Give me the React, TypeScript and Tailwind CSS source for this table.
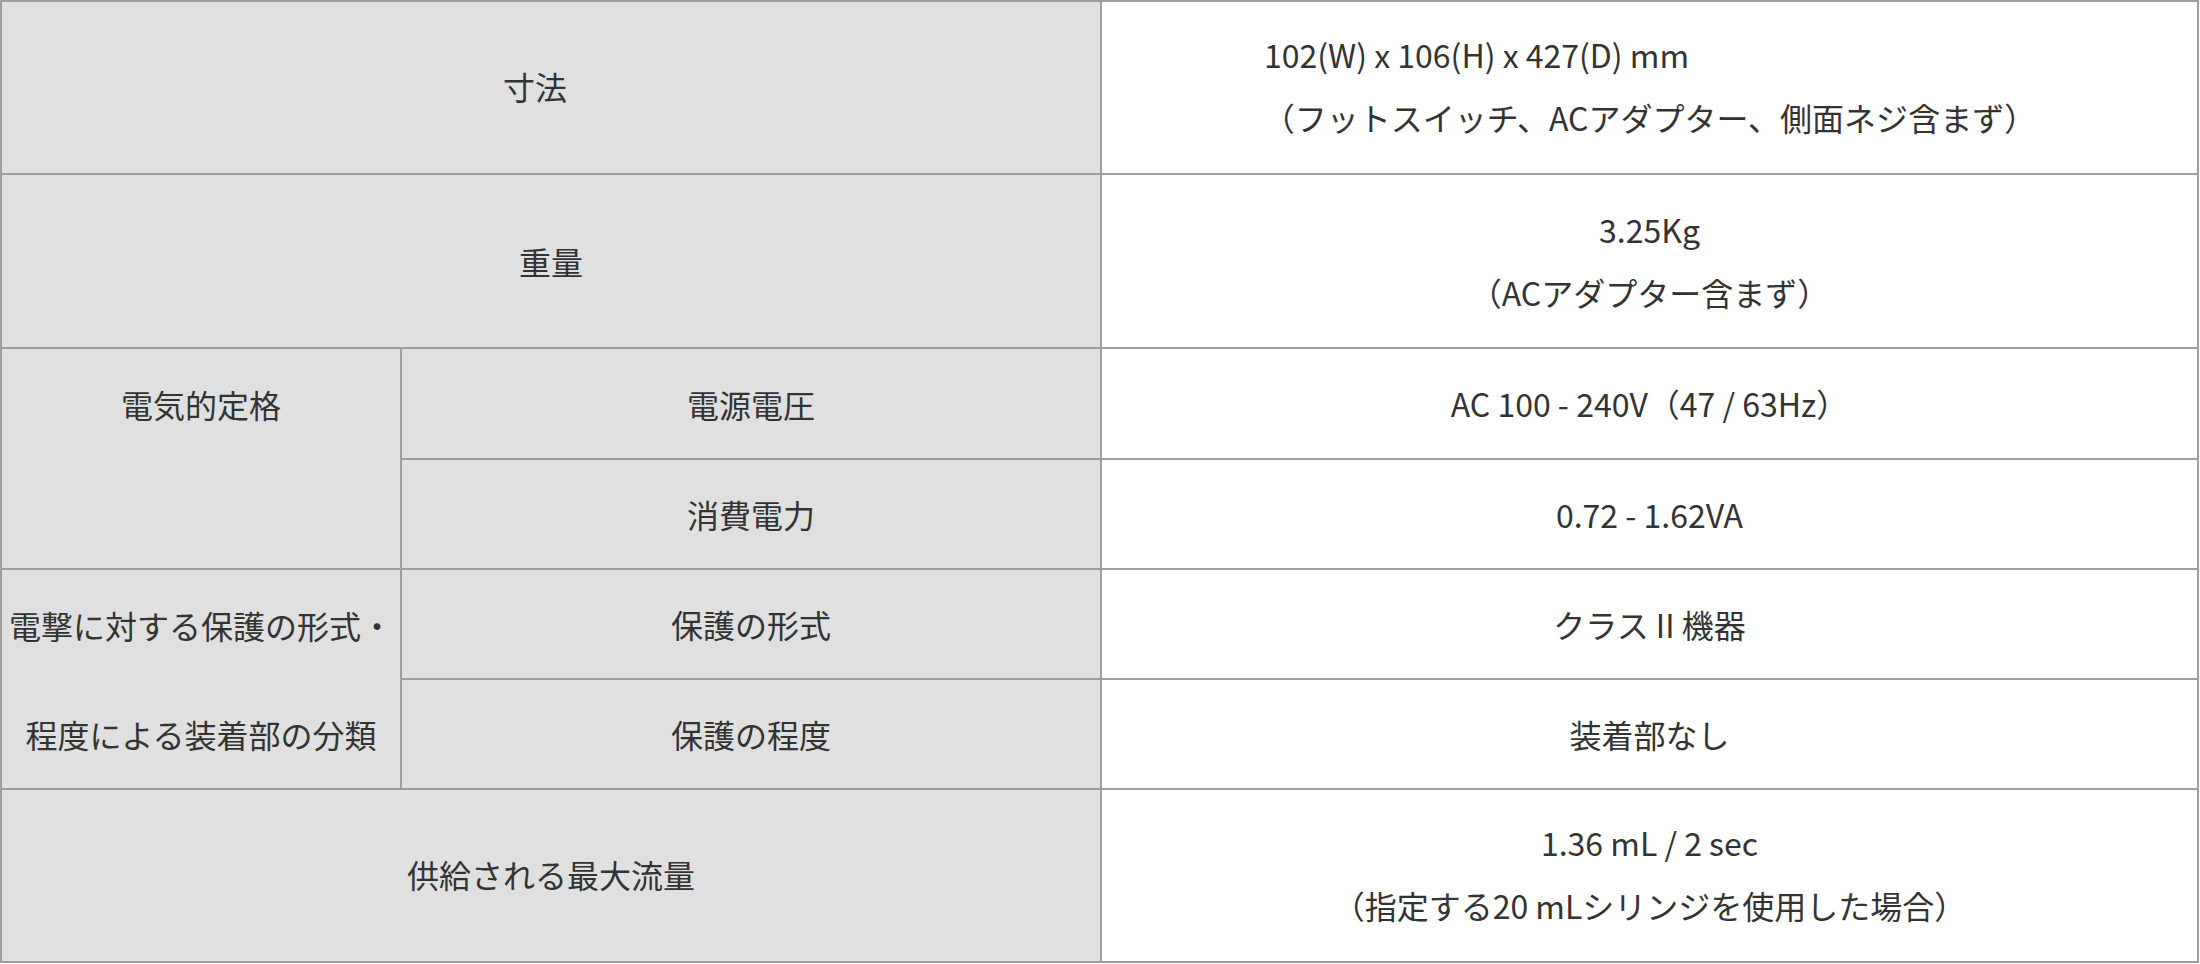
import React from "react";

const label = "bg-[#e0e0e0] flex items-center justify-center";
const value = "bg-white flex flex-col items-center justify-center leading-[63px]";

export default function App() {
  return (
    <div
      className="w-[2200px] h-[964px] bg-white text-[#333333] text-[32px] leading-[1.5]"
      style={{ fontFamily: '"Noto Sans CJK JP", "Noto Sans", sans-serif' }}
    >
      <div className="grid w-[2199px] grid-cols-[398px_698px_1095px] grid-rows-[171px_172px_109px_108px_108px_108px_171px] gap-[2px] bg-[#9e9e9e] p-[2px]">
        {/* Row 1 */}
        <div className={`${label} col-span-2 pr-8 pb-[4px]`}>寸法</div>
        <div className={`${value} pb-[4px]`}>
          <div className="self-stretch pl-[162px] text-left">102(W) x 106(H) x 427(D) mm</div>
          <div>（フットスイッチ、ACアダプター、側面ネジ含まず）</div>
        </div>

        {/* Row 2 */}
        <div className={`${label} col-span-2`}>重量</div>
        <div className={value}>
          <div>3.25Kg</div>
          <div>（ACアダプター含まず）</div>
        </div>

        {/* Row 3-4 */}
        <div className="bg-[#e0e0e0] row-span-2 flex flex-col">
          <div className="h-[109px] flex items-center justify-center whitespace-nowrap">電気的定格</div>
        </div>
        <div className={label}>電源電圧</div>
        <div className={value}>AC 100 - 240V（47 / 63Hz）</div>
        <div className={label}>消費電力</div>
        <div className={value}>0.72 - 1.62VA</div>

        {/* Row 5-6 */}
        <div className="bg-[#e0e0e0] row-span-2 flex flex-col">
          <div className="h-[109px] flex items-center justify-center whitespace-nowrap">電撃に対する保護の形式・</div>
          <div className="h-[109px] flex items-center justify-center whitespace-nowrap">程度による装着部の分類</div>
        </div>
        <div className={label}>保護の形式</div>
        <div className={value}>クラス II 機器</div>
        <div className={label}>保護の程度</div>
        <div className={value}>装着部なし</div>

        {/* Row 7 */}
        <div className={`${label} col-span-2 pb-[4px]`}>供給される最大流量</div>
        <div className={`${value} pb-[4px]`}>
          <div>1.36 mL / 2 sec</div>
          <div>（指定する20 mLシリンジを使用した場合）</div>
        </div>
      </div>
    </div>
  );
}
